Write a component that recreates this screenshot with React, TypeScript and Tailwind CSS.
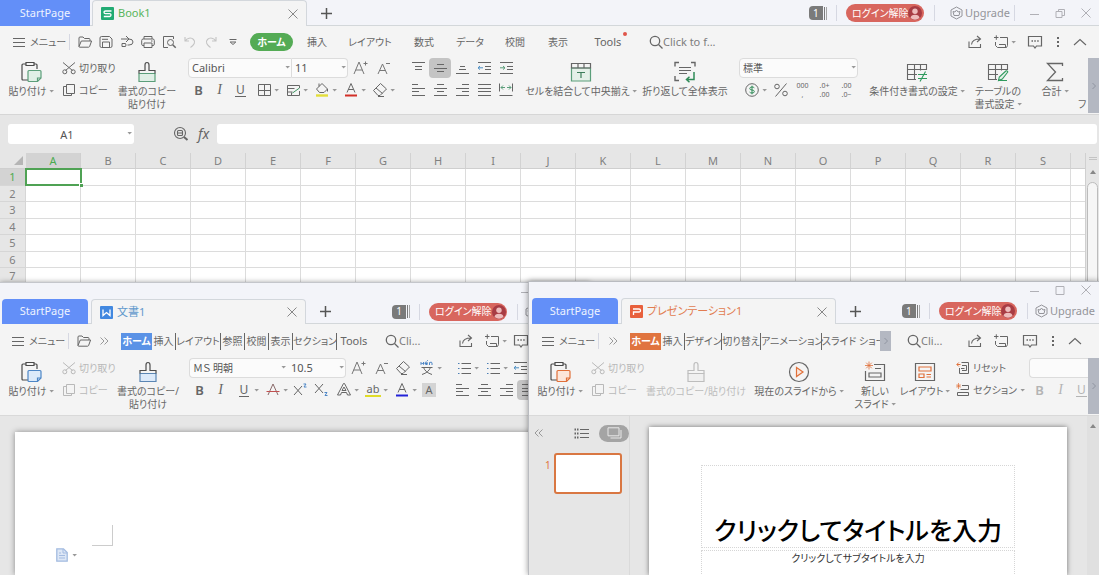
import React from 'react';
import type { ReactNode } from 'react';

type Kids = { children?: ReactNode };

/* ---------- drawing helpers ---------- */

function Ic({ w = 16, h = 16, sw = 1, className = '', children }: Kids & { w?: number; h?: number; sw?: number; className?: string }) {
  return (
    <svg
      width={w}
      height={h}
      viewBox={`0 0 ${w} ${h}`}
      fill="none"
      stroke="currentColor"
      strokeWidth={sw}
      aria-hidden="true"
      className={`shrink-0 ${className}`}
    >
      {children}
    </svg>
  );
}

const Caret = () => (
  <svg width="5" height="3" viewBox="0 0 5 3" aria-hidden="true" className="shrink-0">
    <path d="M.5 0h4.500L2.500 2.500z" fill="#999" />
  </svg>
);

const Lines = ({ rows }: { rows: [number, number, number][] }) => (
  <Ic>
    <path d={rows.map(([y, a, b]) => `M${a} ${y}H${b}`).join('')} />
  </Ic>
);

const Menu = () => (
  <Ic w={12} h={10}>
    <path d="M0 1.5h12M0 5.500h12M0 9.500h12" />
  </Ic>
);
const Folder = () => (
  <Ic>
    <path d="M2 12.5V4q0-1 1-1h3l1.5 1.5H12q1 0 1 1V7M2 12.5 4.3 7H14.6l-2 5.5q-.3.7-1 .7H2.6q-.6 0-.6-.7z" />
  </Ic>
);
const Save = () => (
  <Ic>
    <path d="M2 4q0-1.5 1.5-1.5h8L14 5v7q0 1.500-1.500 1.500h-9Q2 13.500 2 12zM4.500 13.500V8h7v5.500M4 5.300h6" />
  </Ic>
);
const Export = () => (
  <Ic>
    <path d="M2 5h8q4 0 4 3t-4 3H8.500M7 2l3 3-3 3M3 9.500h3.500q1 1.500 0 3H3z" />
  </Ic>
);
const Print = () => (
  <Ic>
    <path d="M4 5V2.500h8V5M4 11.500H3q-1.300 0-1.300-1.300V6.500Q1.700 5 3.200 5h9.600q1.500 0 1.500 1.500v3.700q0 1.300-1.300 1.300h-1M4 9h8v4.500H4zM11 7h1.500" />
  </Ic>
);
const Preview = () => (
  <Ic>
    <path d="M7 13.500H2.500v-11h10V5" />
    <circle cx="9.500" cy="8.500" r="3" />
    <path d="m11.700 10.800 3 3" strokeWidth="1.500" />
  </Ic>
);
const Undo = () => (
  <Ic className="text-[#c4c4c4]" sw={1.1}>
    <path d="M3 3v4h4M3.300 7C5 4 9 3 11.500 5.500S12 11 8.500 13.500" />
  </Ic>
);
const Redo = () => (
  <Ic className="text-[#c4c4c4]" sw={1.1}>
    <path d="M13 3v4H9M12.700 7C11 4 7 3 4.500 5.500S4 11 7.500 13.500" />
  </Ic>
);
const QuickMore = () => (
  <Ic w={10} h={10}>
    <path d="M1.500 2.500h7M2.200 5 5 7.500 7.800 5z" />
  </Ic>
);
const Search = () => (
  <Ic w={14} h={14} sw={1.3}>
    <circle cx="6" cy="6" r="4.700" />
    <path d="m9.500 9.500 4 4" />
  </Ic>
);
const Share = () => (
  <Ic sw={1.1}>
    <path d="M2 7.500v6h11.500V10M4.500 10.500c.5-4 3-5.500 8.500-5.500M10 2l3.500 3L10 8" />
  </Ic>
);
const Collab = () => (
  <Ic>
    <path d="M7 3.500h7.500v8l-1 2H4.500l-2-2V8M1 3.500h4.500M3.300 1.300v4.500M12.500 13.500v-3H6" />
  </Ic>
);
const Comment = () => (
  <Ic sw={1.2}>
    <path d="M1.500 2.500h13v9.500h-5L8 14l-1.500-2h-5z" />
    <path d="M4.500 7H6M7.300 7h1.500M10.200 7h1.500" strokeWidth="1.400" />
  </Ic>
);
const Dots = () => (
  <svg width="2" height="12" viewBox="0 0 2 12" aria-hidden="true">
    <path d="M0 1h2v2H0zM0 5h2v2H0zM0 9h2v2H0z" fill="#666" />
  </svg>
);
const ChevUp = () => (
  <Ic w={14} h={8} sw={1.1}>
    <path d="m1 7 6-5.500L13 7" />
  </Ic>
);
const Close = () => (
  <Ic w={10} h={10}>
    <path d="m.5.500 9 9M9.500.500l-9 9" />
  </Ic>
);
const More = ({ left = false }: { left?: boolean }) => (
  <Ic w={9} h={8} className="text-[#999]">
    <path d={left ? 'M4.500.500 1 4l3.500 3.500M8.500.500 5 4l3.500 3.500' : 'm.5.500 3.500 3.500L.5 7.500M4.500.500 8 4 4.500 7.500'} />
  </Ic>
);
const Scissors = () => (
  <Ic w={14} h={14}>
    <path d="m1 1.500 9.500 8M13 1.500 3.500 9.500" />
    <circle cx="2.800" cy="10.800" r="2" />
    <circle cx="11.200" cy="10.800" r="2" />
  </Ic>
);
const Copy = () => (
  <Ic w={14} h={14}>
    <path d="M4.500 1.500h8v9h-8zM4.500 3.500h-3v9h8v-2" />
  </Ic>
);
const Paste = ({ line, fill }: { line: string; fill: string }) => (
  <Ic w={22} h={22} sw={1.2} className="text-[#4a4a4a]">
    <path d="M8 19H3q-1 0-1-1V4q0-1 1-1h3M14 3h2q1 0 1 1v4" />
    <path d="M6 1.500h8v3H6z" />
    <path d="M9 9.500h11q1 0 1 1V17l-3.500 3.500H9q-1 0-1-1v-9q0-1 1-1z" fill={fill} stroke={line} />
    <path d="M21 17h-3.500v3.500" stroke={line} />
  </Ic>
);
const Painter = ({ line, fill, dark = '#4c4c4c' }: { line: string; fill: string; dark?: string }) => (
  <Ic w={22} h={22} sw={1.2}>
    <path d="M3 12.500h16v8H3z" fill={fill} stroke={line} />
    <path d="M3 12.500V9.500h6V4q0-2.500 2-2.500T13 4v5.500h6v3" stroke={dark} />
  </Ic>
);
const Eraser = () => (
  <Ic>
    <path d="m1.500 8.500 7-7 6 5.500-6.500 6.500H6zM4 6l6.500 5.500" />
    <path d="M6 14.500h6" />
  </Ic>
);
const Grow = ({ minus = false }: { minus?: boolean }) => (
  <Ic className="text-[#777]">
    <path d={minus ? 'M3 14 7.500 4 12 14M4.700 10.500h5.600M11 3.500h4' : 'M2 14 7 2l5 12M3.700 10h6.600M11.500 3.500h4M13.500 1.500v4'} />
  </Ic>
);
const Indent = ({ out = false }: { out?: boolean }) => (
  <Ic>
    <path d="M2 2.500h13M9 6.500h6M9 9.500h6M2 13.500h13" />
    <path d={out ? 'M2 7.800h5M4 6 2 7.800 4 9.600' : 'M2 7.800h5M5 6l2 1.800L5 9.600'} stroke={out ? '#4d8fc4' : '#5b9e7a'} />
  </Ic>
);
const Distribute = () => (
  <Ic>
    <path d="M1.500 1.500v8M14.500 1.500v8M1.500 13.500h13" />
    <path d="M3 5.500h4M13 5.500H9M5 3.500l-2 2 2 2M11 3.500l2 2-2 2" stroke="#5b9e7a" />
  </Ic>
);
const Borders = () => (
  <Ic>
    <path d="M2.500 2.500h12v11h-12zM8.500 2.500v11M2.500 8.500h12" />
  </Ic>
);
const CellStyle = () => (
  <Ic>
    <path d="M14.500 6V3.500h-12v10h12V9M2.500 6.500h7M2.500 10h5M6.500 13.500v-3" />
    <path d="m7.500 11 7-5" stroke="#3d9560" />
  </Ic>
);
const Fill = () => (
  <Ic>
    <path d="m2.500 7 5.500-5.500L13.500 7 10 10.500H5.500zM5 4.500V1.500M13.500 7v2.500" />
    <path d="M2 13.500h12" stroke="#e3de3a" strokeWidth="2.400" />
  </Ic>
);
const LetterBar = ({ bar }: { bar: string }) => (
  <Ic>
    <path d="M4 10.500 8 1.500l4 9M5.300 7.500h5.400" />
    <path d="M2 13.500h12" stroke={bar} strokeWidth="2" />
  </Ic>
);
const Ruby = () => (
  <Ic>
    <path d="M2.500 7.500h11M11.500 7.500q-2 5-8.500 7M4.500 7.500q2 5 8.500 7" />
    <path d="M2 2v2.500l1.300-1.500L4.500 4.500V2M6 3.500h2.500Q8.500 2 7.200 2T6 3.500t2.500 1M10.500 5V2.500q2.500-1 2.500.5v2M8 .5l1-.4" stroke="#4d86c6" />
  </Ic>
);
const Merge = () => (
  <Ic w={22} h={22} sw={1.2}>
    <path d="M1.500 7h19v13h-19z" fill="#e4f0e8" stroke="#5b9e7a" />
    <path d="M1.500 7V2.500h19V7zM8 2.500V7M14 2.500V7" />
    <path d="M7 11.500h8M11 11.500V17" stroke="#3d7d5a" />
  </Ic>
);
const Wrap = () => (
  <Ic w={22} h={22}>
    <path d="M1 5.500v-4h4M17 1.500h4v4M1 15v4.500h4" strokeWidth="1.400" />
    <path d="M5 6.500h12M5 9.500h12M5 12.500h8" />
    <path d="M20 11v7.500h-7M15.500 15.800l-3 2.700 3 2.700" stroke="#2f8a57" strokeWidth="1.500" />
  </Ic>
);
const TableIcon = ({ kind }: { kind: 'cond' | 'style' }) => (
  <Ic w={22} h={22} sw={1.1}>
    <path d="M20.500 9V3.500h-19v15H10M1.500 8.500h19M8.500 3.500v15M1.500 13.500H11M14.500 3.500v6" />
    {kind === 'cond' ? (
      <path d="M12 13.500h9M12 17.500h9M19.500 10.500l-5.500 10" stroke="#2f9a5d" />
    ) : (
      <path d="m11.500 19.500.8-3.500 6.500-6q1.500-.7 2 1l-5.500 7zM11.500 19.500H20" stroke="#2f9a5d" fill="#e4f0e8" />
    )}
  </Ic>
);
const Sum = () => (
  <Ic w={22} h={22} sw={1.3}>
    <path d="M18.500 5V2.500H3.500l8 8.500-8 8.500h15V17" />
  </Ic>
);
const Money = () => (
  <Ic>
    <circle cx="8" cy="8" r="6.300" />
    <path d="M10.300 5.800Q9.500 5 8 5q-2.200 0-2.200 1.500T8 8t2.300 1.500T8 11q-1.700 0-2.400-.9M8 3.700v8.600" stroke="#2f8a57" />
  </Ic>
);
const Percent = () => (
  <Ic>
    <circle cx="4" cy="4.500" r="2.300" />
    <circle cx="12" cy="11.500" r="2.300" />
    <path d="m2.500 14.500 11-13" />
  </Ic>
);
const FindCell = () => (
  <Ic sw={1.1}>
    <circle cx="7" cy="7" r="5.500" />
    <path d="M4.500 5.500q0-1 1-1h3q1 0 1 1v3q0 1-1 1h-3q-1 0-1-1zM4.500 7h5" />
    <path d="m11 11 3.500 3" strokeWidth="2" />
  </Ic>
);
const Bullets = () => (
  <Ic>
    <path d="M5.500 3.500H15M5.500 8.500H15M5.500 13.500H15" />
    <path d="M2 3.500h1.500M2 8.500h1.500M2 13.500h1.500" stroke="#4d7fb4" />
  </Ic>
);
const Play = () => (
  <Ic w={22} h={22} sw={1.2}>
    <circle cx="11" cy="11" r="9.500" />
    <path d="m8.500 6.500 6.500 4.500-6.500 4.500z" stroke="#e0703a" fill="#fce6da" />
  </Ic>
);
const NewSlide = () => (
  <Ic w={22} h={22} sw={1.2}>
    <path d="M10 3.500h10.500v16h-19V10M11 7.500h6M5 12h12v4H5z" />
    <path d="M5 .5v8M1 4.500h8M2.200 1.700l5.600 5.600M7.800 1.700 2.200 7.300" stroke="#e0703a" strokeWidth=".8" />
  </Ic>
);
const LayoutIcon = () => (
  <Ic w={22} h={22} sw={1.2}>
    <path d="M1.500 2.500h19v17h-19z" />
    <path d="M5 6h12v4H5zM5 13h5v3.500H5zM12.500 13.500H17M12.500 16H17" stroke="#e0703a" />
  </Ic>
);
const Reset = () => (
  <Ic w={14} h={14}>
    <path d="M5.500 1.500h7v11h-9V7M6 4.500h4.500v5H6M5 7.500h3.500" />
    <path d="M1 3.500h3.500M2.800 1.500l-2 2 2 2" stroke="#e0703a" />
  </Ic>
);
const SectionIcon = () => (
  <Ic w={14} h={14}>
    <path d="M6 2.500h6.500v4h-8M1.500 9.500h11v3h-11z" />
    <path d="M2.500 0v6M0 3h5M.8 1.200l3.500 3.500M4.300 1.200.8 4.700" stroke="#e0703a" strokeWidth=".7" />
  </Ic>
);

/* ---------- controls ---------- */

function Btn({ label, w = 'w-[22px]', on = false, children }: Kids & { label: string; w?: string; on?: boolean }) {
  return (
    <button
      type="button"
      aria-label={label}
      className={`flex h-5 shrink-0 items-center justify-center rounded-sm ${w} ${on ? 'bg-[#c4c4c4]' : ''}`}
    >
      {children}
    </button>
  );
}

function Split({ label, children }: Kids & { label: string }) {
  return (
    <button type="button" aria-label={label} className="flex h-5 w-[29px] shrink-0 items-center gap-0.5 pl-[5px]">
      {children}
      <Caret />
    </button>
  );
}

function Big({ icon, lines, w, caret = false, dim = false }: { icon: ReactNode; lines: string[]; w: string; caret?: boolean; dim?: boolean }) {
  return (
    <button type="button" className={`flex shrink-0 flex-col items-center whitespace-nowrap ${w} ${dim ? 'text-[#bdbdbd]' : ''}`}>
      <span className="flex h-[27px] items-center">{icon}</span>
      {lines.map((t, i) => (
        <span key={t} className="flex items-center gap-0.5 leading-[13px]">
          {t}
          {caret && i === lines.length - 1 && <Caret />}
        </span>
      ))}
    </button>
  );
}

function Small({ icon, text, caret = false, dim = false }: { icon: ReactNode; text: string; caret?: boolean; dim?: boolean }) {
  return (
    <button type="button" className={`flex h-5 items-center gap-[3px] whitespace-nowrap ${dim ? 'text-[#b9b9b9]' : ''}`}>
      {icon}
      {text}
      {caret && <Caret />}
    </button>
  );
}

const Two = ({ w = '', children }: Kids & { w?: string }) => <div className={`flex shrink-0 flex-col gap-0.5 ${w}`}>{children}</div>;
const Row = ({ children }: Kids) => <div className="flex items-center">{children}</div>;

function Pick({ label, value, w, shape }: { label: string; value: string; w: string; shape: string }) {
  return (
    <label className={`relative block h-5 shrink-0 ${w}`}>
      <select
        aria-label={label}
        defaultValue={value}
        className={`h-full w-full appearance-none border border-[#dcdcdc] bg-[#fbfbfb] pl-[3px] leading-4 text-[#555] ${shape}`}
      >
        <option>{value}</option>
      </select>
      <span className="pointer-events-none absolute top-2 right-0.5 flex">
        <Caret />
      </span>
    </label>
  );
}

/* ---------- title bar ---------- */

function WindowButtons({ restored = false }: { restored?: boolean }) {
  return (
    <div className="flex text-[#b0b0b6]">
      <Btn label="最小化" w="w-[26px]">
        <Ic w={10} h={10}>
          <path d="M1 6.500h9" />
        </Ic>
      </Btn>
      <Btn label="最大化" w="w-[26px]">
        <Ic w={10} h={10}>
          <path d={restored ? 'M1 3.500h6v6H1zM3.500 3.500v-2h6v6H7' : 'M1 1.500h8v8H1z'} />
        </Ic>
      </Btn>
      <Btn label="閉じる" w="w-[26px]">
        <Close />
      </Btn>
    </div>
  );
}

const Bar = ({ className = '' }: { className?: string }) => <span className={`h-4 w-px shrink-0 bg-[#d6d8e2] ${className}`} />;

function Account({ gap, covered = false }: { gap: string; covered?: boolean }) {
  return (
    <div className="ml-auto flex shrink-0 items-center">
      <button type="button" className="flex h-[14px] items-center gap-px text-[10px] text-white">
        <span className="flex h-[14px] w-[14px] items-center justify-center rounded-l-sm bg-[#7a7a7a]">1</span>
        <span className="h-[13px] w-px bg-[#7a7a7a]" />
        <span className="h-[13px] w-px bg-[#a4a4a4]" />
      </button>
      <Bar className="ml-[9px]" />
      <button
        type="button"
        className="ml-[9px] flex h-[18px] w-[78px] items-center justify-between rounded-full bg-[#d8665e] pr-0.5 pl-1.5 text-[10px] whitespace-nowrap text-white"
      >
        ログイン解除
        <svg width="14" height="14" viewBox="0 0 14 14" aria-hidden="true" className="shrink-0">
          <circle cx="7" cy="7" r="7" fill="#a83c44" />
          <circle cx="7" cy="5.200" r="2.700" fill="#eebcbc" />
          <path d="M2.500 12Q3 8.800 7 8.800t4.500 3.200Q7 15.500 2.500 12z" fill="#eebcbc" />
        </svg>
      </button>
      <Bar className="ml-[10px]" />
      <button type="button" aria-label="Upgrade" className={`flex items-center gap-0.5 text-[11px] text-[#94949a] ${gap}`}>
        <Ic w={13} h={14}>
          <path d="M6.500 1 12 4v6l-5.500 3L1 10V4z" />
          <path d="m6.500 4 1.500 2 2-.5-1 4H4l-1-4 2 .5z" />
        </Ic>
        {covered ? <span className="w-[46px]" /> : 'Upgrade'}
      </button>
    </div>
  );
}

const marks = {
  S: { bg: 'bg-[#22ab73]', text: 'text-[#58b45c]', d: 'M10.500 4H4.500Q3 4 3 5.300t1.500 1.300h4Q10 6.600 10 8t-1.500 1.500H2.800' },
  W: { bg: 'bg-[#4288e0]', text: 'text-[#6299cc]', d: 'M3 3.500v6L6.500 6.500 10 9.500v-6' },
  P: { bg: 'bg-[#e8603c]', text: 'text-[#e27c50]', d: 'M3 4h6q1.500 0 1.500 1.500T9 7H3.500v3' },
};

function Tabs({ mark, name, height, start, children }: Kids & { mark: keyof typeof marks; name: string; height: string; start: string }) {
  const m = marks[mark];
  return (
    <div className={`flex items-stretch shadow-[inset_0_-1px_0_#d3d7da] ${height}`}>
      <button type="button" className={`flex shrink-0 items-center justify-center bg-[#638ff8] text-[11px] text-[#eef3ff] ${start}`}>
        StartPage
      </button>
      <div className={`flex w-[215px] shrink-0 items-center rounded-t-sm border border-b-0 border-[#d3d7dc] bg-[#f4f4f4] pr-2 pl-2 text-[11px] ${m.text}`}>
        <span className={`mr-1 flex rounded-[1px] text-white ${m.bg}`}>
          <Ic w={13} h={13} sw={1.3}>
            <path d={m.d} />
          </Ic>
        </span>
        {name}
        <button type="button" aria-label="タブを閉じる" className="ml-auto text-[#888]">
          <Close />
        </button>
      </div>
      <button type="button" aria-label="新しいタブ" className="ml-[14px] flex items-center text-[#555]">
        <Ic w={11} h={11} sw={1.5}>
          <path d="M5.500 0v11M0 5.500h11" />
        </Ic>
      </button>
      {children}
    </div>
  );
}

const MenuButton = () => (
  <button type="button" className="flex w-[56px] shrink-0 items-center gap-[5px] text-[10px] whitespace-nowrap">
    <Menu />
    メニュー
  </button>
);

function MenuTail({ space, caret = false }: { space: string; caret?: boolean }) {
  return (
    <div className="ml-auto flex shrink-0 items-center">
      <Btn label="共有" w="w-[26px]">
        <Share />
      </Btn>
      {caret ? (
        <Split label="共同編集">
          <Collab />
        </Split>
      ) : (
        <Btn label="共同編集" w="w-[26px]">
          <Collab />
        </Btn>
      )}
      <span className={space} />
      <Btn label="コメント" w="w-6">
        <Comment />
      </Btn>
      <Btn label="その他">
        <Dots />
      </Btn>
      <Btn label="リボンを折りたたむ">
        <ChevUp />
      </Btn>
    </div>
  );
}

const Finder = ({ text, gap }: { text: string; gap: string }) => (
  <button type="button" className={`flex shrink-0 items-center text-[11px] whitespace-nowrap ${gap}`}>
    <Search />
    <span className="text-[#7d7d7d]">{text}</span>
  </button>
);

type Tab = { t: string; w: string };

function RuledTabs({ home, tabs }: { home: string; tabs: Tab[] }) {
  return (
    <nav className="flex shrink-0 items-center text-[10px] whitespace-nowrap">
      <button type="button" className={`h-[17px] w-[31px] font-bold text-white ${home}`}>
        ホーム
      </button>
      {tabs.map((x, i) => (
        <button key={x.t} type="button" className={`h-[17px] shrink-0 ${x.w} ${i < tabs.length - 1 ? 'border-r border-[#666]' : ''}`}>
          {x.t}
        </button>
      ))}
    </nav>
  );
}

const SideScroll = ({ h }: { h: string }) => (
  <button type="button" aria-label="次へ" className={`flex w-[11px] shrink-0 items-center justify-center bg-[#b4b8c2] text-[#8f94a0] ${h}`}>
    <Ic w={4} h={8}>
      <path d="m.5 1 3 3-3 3" />
    </Ic>
  </button>
);

const B = () => <b className="text-[13px] leading-none font-semibold">B</b>;
const I = () => <i className="font-['Liberation_Serif',serif] text-[14px] leading-none">I</i>;
const U = () => <span className="border-b border-current px-px text-[12px] leading-[12px]">U</span>;

/* ---------- spreadsheet ---------- */

const columns = 'ABCDEFGHIJKLMNOPQRS'.split('');
const sheetTabs: Tab[] = [
  { t: '挿入', w: 'w-12' },
  { t: 'レイアウト', w: 'w-[58px]' },
  { t: '数式', w: 'w-[50px]' },
  { t: 'データ', w: 'w-[42px]' },
  { t: '校閲', w: 'w-12' },
  { t: '表示', w: 'w-[38px]' },
];

function Digits({ top, bottom }: { top: string; bottom: string }) {
  return (
    <span className="flex flex-col text-[7px] leading-[9px]">
      <span>{top}</span>
      <span>{bottom}</span>
    </span>
  );
}

function Spreadsheet() {
  return (
    <section className="absolute inset-0 flex flex-col bg-[#f4f4f4]">
      <div className="bg-[#f3f4f9]">
        <Tabs mark="S" name="Book1" height="h-[26px]" start="mr-0.5 w-[90px]">
          <Account gap="ml-[15px]" />
          <div className="ml-1 flex items-center gap-1.5">
            <Bar />
            <WindowButtons restored />
          </div>
        </Tabs>
      </div>

      <div className="flex h-8 items-center pr-2 pl-[13px]">
        <MenuButton />
        <Bar className="mr-1" />
        <Btn label="開く" w="w-[21px]"><Folder /></Btn>
        <Btn label="保存" w="w-[21px]"><Save /></Btn>
        <Btn label="出力" w="w-[21px]"><Export /></Btn>
        <Btn label="印刷" w="w-[21px]"><Print /></Btn>
        <Btn label="印刷プレビュー" w="w-[21px]"><Preview /></Btn>
        <Btn label="元に戻す" w="w-[21px]"><Undo /></Btn>
        <Btn label="やり直し" w="w-[21px]"><Redo /></Btn>
        <Btn label="カスタマイズ" w="w-6"><QuickMore /></Btn>
        <nav className="ml-[5px] flex shrink-0 items-center text-[10px] whitespace-nowrap">
          <button type="button" className="h-[18px] w-[43px] rounded-full bg-[#54ab55] font-bold text-white">ホーム</button>
          {sheetTabs.map((x) => (
            <button key={x.t} type="button" className={`shrink-0 ${x.w}`}>{x.t}</button>
          ))}
          <button type="button" className="relative w-[62px] text-[11px]">
            Tools
            <span className="absolute -top-0.5 right-3 size-1 rounded-full bg-[#e0554a]" />
          </button>
        </nav>
        <Finder text="Click to f..." gap="ml-[10px]" />
        <MenuTail caret space="w-1.5" />
      </div>

      <div className="flex h-14 items-start">
        <Big w="w-[62px]" icon={<Paste line="#5b9e7a" fill="#e0efe6" />} lines={['貼り付け']} caret />
        <Two w="w-14">
          <Small icon={<Scissors />} text="切り取り" />
          <Small icon={<Copy />} text="コピー" />
        </Two>
        <Big w="w-[58px]" icon={<Painter line="#5b9e7a" fill="#e0efe6" />} lines={['書式のコピー', '貼り付け']} />
        <Two w="ml-3 w-[219px]">
          <Row>
            <Pick label="フォント" value="Calibri" w="w-[104px] text-[11px]" shape="rounded-l-sm" />
            <Pick label="フォント サイズ" value="11" w="w-14 text-[11px]" shape="rounded-r-sm border-l-0" />
            <Btn label="フォントの拡大" w="w-6"><Grow /></Btn>
            <Btn label="フォントの縮小"><Grow minus /></Btn>
          </Row>
          <Row>
            <Btn label="太字" w="w-[21px]"><B /></Btn>
            <Btn label="斜体" w="w-[21px]"><I /></Btn>
            <Btn label="下線" w="w-[21px]"><U /></Btn>
            <Split label="罫線"><Borders /></Split>
            <Split label="セルのスタイル"><CellStyle /></Split>
            <Split label="塗りつぶし"><Fill /></Split>
            <Split label="文字の色"><LetterBar bar="#d22f27" /></Split>
            <Split label="クリア"><Eraser /></Split>
          </Row>
        </Two>
        <Two w="w-[110px]">
          <Row>
            <Btn label="上揃え"><Lines rows={[[2.5, 2, 15], [6.5, 5, 12], [9.5, 5, 12]]} /></Btn>
            <Btn label="上下中央揃え" on><Lines rows={[[4.5, 5, 12], [8.5, 2, 15], [11.5, 5, 12]]} /></Btn>
            <Btn label="下揃え"><Lines rows={[[6.5, 6, 11], [9.5, 5, 12], [13.5, 2, 15]]} /></Btn>
            <Btn label="インデント解除"><Indent out /></Btn>
            <Btn label="インデント"><Indent /></Btn>
          </Row>
          <Row>
            <Btn label="左揃え"><Lines rows={[[2.5, 2, 8], [6.5, 2, 15], [9.5, 2, 9], [13.5, 2, 15]]} /></Btn>
            <Btn label="中央揃え"><Lines rows={[[2.5, 5, 12], [6.5, 2, 15], [9.5, 5, 12], [13.5, 2, 15]]} /></Btn>
            <Btn label="右揃え"><Lines rows={[[2.5, 8, 15], [6.5, 2, 15], [9.5, 8, 15], [13.5, 2, 15]]} /></Btn>
            <Btn label="両端揃え"><Lines rows={[[2.5, 2, 15], [6.5, 2, 15], [9.5, 2, 15], [13.5, 2, 15]]} /></Btn>
            <Btn label="均等割り付け"><Distribute /></Btn>
          </Row>
        </Two>
        <Big w="ml-2 w-28" icon={<Merge />} lines={['セルを結合して中央揃え']} caret />
        <Big w="ml-1 w-[88px]" icon={<Wrap />} lines={['折り返して全体表示']} />
        <Two w="ml-[10px] w-[119px]">
          <Pick label="表示形式" value="標準" w="w-full" shape="rounded-sm" />
          <Row>
            <Split label="通貨"><Money /></Split>
            <Btn label="パーセント" w="w-[25px]"><Percent /></Btn>
            <Btn label="桁区切り" w="w-[19px]"><Digits top="000" bottom="," /></Btn>
            <Btn label="小数点以下を増やす" w="w-[25px]"><Digits top=".0+" bottom=".00" /></Btn>
            <Btn label="小数点以下を減らす" w="w-[19px]"><Digits top=".00" bottom=".0−" /></Btn>
          </Row>
        </Two>
        <Big w="ml-[9px] w-[100px]" icon={<TableIcon kind="cond" />} lines={['条件付き書式の設定']} caret />
        <Big w="ml-[3px] w-14" icon={<TableIcon kind="style" />} lines={['テーブルの', '書式設定']} caret />
        <Big w="w-[58px]" icon={<Sum />} lines={['合計']} caret />
        <span className="-ml-1.5 mt-10 shrink-0 leading-[13px]">フ</span>
        <div className="ml-auto">
          <SideScroll h="h-[55px]" />
        </div>
      </div>

      <div className="flex h-[39px] items-center border-t border-[#d6d6d6] bg-[#e6e6e6] pr-0.5 pl-2">
        <label className="relative block">
          <input aria-label="名前ボックス" defaultValue="A1" className="h-5 w-[126px] rounded-[3px] bg-white pr-2 text-center text-[11px] text-[#555]" />
          <span className="absolute top-2 right-0.5 flex"><Caret /></span>
        </label>
        <span className="ml-[39px] flex w-[25px] shrink-0"><FindCell /></span>
        <span className="w-[19px] shrink-0 text-[14px] leading-5 italic">fx</span>
        <input aria-label="数式バー" className="h-5 min-w-0 flex-1 rounded-[3px] bg-white" />
      </div>

      <div className="flex min-h-0 flex-1 bg-[#e6e6e6]">
        <div className="min-w-0 flex-1 overflow-hidden">
          <table className="w-full table-fixed border-separate border-spacing-0 text-[#808080]">
            <colgroup>
              <col className="w-[26px]" />
              {columns.map((c) => (
                <col key={c} className="w-[55px]" />
              ))}
              <col />
            </colgroup>
            <thead>
              <tr className="text-[11px] leading-[14px]">
                <th className="h-4 border-b border-[#cfcfcf] p-0">
                  <svg width="9" height="9" viewBox="0 0 9 9" aria-hidden="true" className="ml-[14px]">
                    <path d="M9 0v9H0z" fill="#b5b5b5" />
                  </svg>
                </th>
                {columns.map((c) => (
                  <th
                    key={c}
                    scope="col"
                    className={`border-r border-b p-0 font-normal ${c === 'A' ? 'border-[#cfcfcf] bg-[#d3d3d3] text-[#4bab50]' : 'border-r-[#d2d2d2] border-b-[#cfcfcf]'}`}
                  >
                    {c}
                  </th>
                ))}
                <th className="border-b border-[#cfcfcf] p-0" />
              </tr>
            </thead>
            <tbody>
              {[1, 2, 3, 4, 5, 6, 7].map((r) => (
                <tr key={r} className="odd:h-[17px] even:h-4">
                  <th
                    scope="row"
                    className={`border-r border-b border-[#d6d6d6] p-0 text-[11px] leading-[14px] font-normal ${r === 1 ? 'bg-[#d3d3d3] text-[#4bab50]' : ''}`}
                  >
                    {r}
                  </th>
                  {columns.map((c) => (
                    <td key={c} className="relative border-r border-b border-[#dcdcdc] bg-white p-0">
                      {r === 1 && c === 'A' && (
                        <span className="absolute -inset-px -right-0.5 z-10 border-2 border-[#4fa254]">
                          <span className="absolute -right-[3px] -bottom-[3px] size-1 border-t border-l border-white bg-[#4fa254]" />
                        </span>
                      )}
                    </td>
                  ))}
                  <td className="border-b border-[#dcdcdc] bg-white p-0" />
                </tr>
              ))}
            </tbody>
          </table>
        </div>
        <div className="flex w-[14px] flex-col items-center border-l border-[#d0d0d0] pt-1">
          <span className="h-[3px] w-2 border-y border-[#c4c4c4]" />
          <svg width="6" height="4" viewBox="0 0 6 4" aria-hidden="true" className="mt-2.5 mb-2">
            <path d="M3 0 6 4H0z" fill="#888" />
          </svg>
          <span className="w-[11px] flex-1 rounded-t-md border border-[#bcbcbc] bg-[#f6f6f6]" />
        </div>
      </div>
    </section>
  );
}

/* ---------- word processor ---------- */

const writerTabs: Tab[] = [
  { t: '挿入', w: 'w-6' },
  { t: 'レイアウト', w: 'w-[45px]' },
  { t: '参照', w: 'w-6' },
  { t: '校閲', w: 'w-6' },
  { t: '表示', w: 'w-6' },
  { t: 'セクション', w: 'w-11' },
  { t: 'Tools', w: 'w-[34px] text-[11px]' },
];

function Writer() {
  return (
    <section className="absolute top-[282px] bottom-0 left-0 flex w-[590px] flex-col border-t border-[#c4c6cb] bg-[#f4f4f4] shadow-[0_0_5px_rgba(0,0,0,0.35)]">
      <div className="bg-[#f3f4f9] pl-0.5">
        <div className="flex h-4 items-center justify-end">
          <WindowButtons />
        </div>
        <Tabs mark="W" name="文書1" height="h-[25px]" start="mr-[3px] w-[86px] rounded-t-sm">
          <Account gap="ml-[7px]" covered />
          <span className="w-1" />
        </Tabs>
      </div>

      <div className="flex h-[34px] items-center pr-[13px] pl-3">
        <MenuButton />
        <Bar className="mr-1" />
        <Btn label="開く" w="w-[21px]"><Folder /></Btn>
        <Btn label="クイックアクセス" w="w-[21px]"><More /></Btn>
        <span className="w-1.5" />
        <RuledTabs home="bg-[#5a92e6]" tabs={writerTabs} />
        <Finder text="Cli..." gap="ml-[14px]" />
        <MenuTail caret space="w-px" />
      </div>

      <div className="flex h-[58px] items-start border-b border-[#d9d9d9]">
        <Big w="w-[62px]" icon={<Paste line="#4d86c6" fill="#dceafa" />} lines={['貼り付け']} caret />
        <Two w="w-14">
          <Small dim icon={<Scissors />} text="切り取り" />
          <Small dim icon={<Copy />} text="コピー" />
        </Two>
        <Big w="w-[60px]" icon={<Painter line="#5b86b4" fill="#dceafa" />} lines={['書式のコピー/', '貼り付け']} />
        <Two w="ml-[11px] w-[262px]">
          <Row>
            <Pick label="フォント" value="ＭＳ 明朝" w="w-[99px]" shape="rounded-l-sm border-r-0" />
            <Pick label="フォント サイズ" value="10.5" w="w-[58px] text-[11px]" shape="rounded-r-sm border-l-0" />
            <Btn label="フォントの拡大" w="w-6"><Grow /></Btn>
            <Btn label="フォントの縮小"><Grow minus /></Btn>
            <Btn label="書式のクリア"><Eraser /></Btn>
            <Split label="ルビ"><Ruby /></Split>
          </Row>
          <Row>
            <Btn label="太字" w="w-[21px]"><B /></Btn>
            <Btn label="斜体" w="w-[21px]"><I /></Btn>
            <Split label="下線"><span className="flex w-4 justify-center"><U /></span></Split>
            <Split label="取り消し線">
              <Ic className="text-[#8a6a6a]"><path d="M3 13 8 2l5 11" /><path d="M1.500 9.500h13" stroke="#c05050" /></Ic>
            </Split>
            <Btn label="上付き" w="w-[21px]">
              <Ic><path d="m2 4 8 9M10 4l-8 9" /><path d="M11.500 2h2.500L12 5h2.500" stroke="#4d86c6" /></Ic>
            </Btn>
            <Btn label="下付き" w="w-[21px]">
              <Ic><path d="m2 2 8 9M10 2l-8 9" /><path d="M11.500 10.500H14l-2 3h2.500" stroke="#4d86c6" /></Ic>
            </Btn>
            <Split label="文字の効果">
              <Ic><path d="M1.500 13 7.500 1.500h1l6 11.500h-3l-1-2.500h-5L4.500 13zM6 8.500h4L8 5z" /></Ic>
            </Split>
            <Split label="蛍光ペン">
              <span className="w-4 border-b-2 border-[#e0dc28] text-center text-[11px] leading-3">ab</span>
            </Split>
            <Split label="文字の色"><LetterBar bar="#2323d8" /></Split>
            <Btn label="文字の網かけ"><span className="bg-[#d4d4d4] px-[3px] text-[11px] leading-[14px]">A</span></Btn>
          </Row>
        </Two>
        <Two>
          <Row>
            <Split label="箇条書き"><Bullets /></Split>
            <Split label="段落番号"><Bullets /></Split>
            <Btn label="インデント解除"><Indent out /></Btn>
          </Row>
          <Row>
            <Btn label="左揃え"><Lines rows={[[2.5, 2, 8], [6.5, 2, 15], [9.5, 2, 9], [13.5, 2, 15]]} /></Btn>
            <Btn label="中央揃え"><Lines rows={[[2.5, 5, 12], [6.5, 2, 15], [9.5, 5, 12], [13.5, 2, 15]]} /></Btn>
            <Btn label="右揃え"><Lines rows={[[2.5, 8, 15], [6.5, 2, 15], [9.5, 8, 15], [13.5, 2, 15]]} /></Btn>
            <Btn label="両端揃え" on><Lines rows={[[2.5, 2, 15], [6.5, 2, 15], [9.5, 2, 15], [13.5, 2, 15]]} /></Btn>
          </Row>
        </Two>
      </div>

      <div className="flex min-h-0 flex-1 bg-[#e6e6e6] pt-4 pl-[15px]">
        <div className="flex-1 bg-white pt-[93px] pl-[41px] shadow-[0_0_6px_rgba(0,0,0,0.4)]">
          <div className="ml-9 h-[21px] w-[21px] border-r border-b border-[#cccccc]" />
          <button type="button" aria-label="貼り付けのオプション" className="mt-0.5 flex items-center gap-1">
            <Ic w={12} h={14} className="text-[#a3bbe0]">
              <path d="M.8.800h6.700l3.700 3.700v8.700H.8z" fill="#dde7f6" strokeWidth="1.300" />
              <path d="M7 1v4h4M3 5h2M3 7.500h6M3 10h6" />
            </Ic>
            <Caret />
          </button>
        </div>
      </div>
    </section>
  );
}

/* ---------- presentation ---------- */

const slideTabs: Tab[] = [
  { t: '挿入', w: 'w-6' },
  { t: 'デザイン', w: 'w-[37px]' },
  { t: '切り替え', w: 'w-[39px]' },
  { t: 'アニメーション', w: 'w-[61px]' },
  { t: 'スライド ショー', w: 'w-[58px]' },
];

function Presentation() {
  return (
    <section className="absolute top-[281px] right-0 bottom-0 left-[528px] flex flex-col border-t border-l border-[#b9bbc0] bg-[#f4f4f4] shadow-[0_0_6px_rgba(0,0,0,0.4)]">
      <div className="bg-[#f3f4f9] pl-[3px]">
        <div className="flex h-4 items-center justify-end">
          <WindowButtons />
        </div>
        <Tabs mark="P" name="プレゼンテーション1" height="h-[26px]" start="mr-[3px] w-[86px] rounded-t-sm">
          <Account gap="ml-[7px]" />
          <span className="w-1" />
        </Tabs>
      </div>

      <div className="flex h-[34px] items-center pr-[13px] pl-[13px]">
        <MenuButton />
        <Bar className="mr-1" />
        <Btn label="クイックアクセス" w="w-[21px]"><More /></Btn>
        <span className="w-1.5" />
        <RuledTabs home="bg-[#e0743f]" tabs={slideTabs} />
        <SideScroll h="h-5" />
        <Finder text="Cli..." gap="ml-4" />
        <MenuTail space="w-1" />
      </div>

      <div className="flex h-[58px] items-start border-b border-[#d9d9d9]">
        <Big w="w-[62px]" icon={<Paste line="#e0703a" fill="#fce6da" />} lines={['貼り付け']} caret />
        <Two w="w-14">
          <Small dim icon={<Scissors />} text="切り取り" />
          <Small dim icon={<Copy />} text="コピー" />
        </Two>
        <Big dim w="w-[98px]" icon={<Painter line="#bdbdbd" fill="#f0f0f0" dark="#bdbdbd" />} lines={['書式のコピー/貼り付け']} />
        <Big w="ml-[10px] w-[88px]" icon={<Play />} lines={['現在のスライドから']} caret />
        <Big w="ml-1 w-14" icon={<NewSlide />} lines={['新しい', 'スライド']} caret />
        <Big w="w-11" icon={<LayoutIcon />} lines={['レイアウト']} caret />
        <Two w="ml-[9px] w-[73px]">
          <Small icon={<Reset />} text="リセット" />
          <Small icon={<SectionIcon />} text="セクション" caret />
        </Two>
        <div className="flex min-w-0 flex-1 flex-col gap-0.5 overflow-hidden text-[#b4b4b4]">
          <select aria-label="フォント" className="h-5 w-full shrink-0 appearance-none rounded-l-sm border border-r-0 border-[#dcdcdc] bg-[#fbfbfb]" />
          <Row>
            <Btn label="太字" w="w-[21px]"><B /></Btn>
            <Btn label="斜体" w="w-[21px]"><I /></Btn>
            <Btn label="下線" w="w-[21px]"><U /></Btn>
          </Row>
        </div>
        <SideScroll h="h-[56px]" />
      </div>

      <div className="flex min-h-0 flex-1 bg-[#e6e6e6]">
        <aside className="w-[101px] shrink-0 border-r border-[#dadada] pt-2">
          <div className="flex h-[18px] items-center">
            <button type="button" aria-label="パネルを閉じる" className="w-[45px] pl-[5px]"><More left /></button>
            <button type="button" aria-label="アウトライン" className="text-[#666]">
              <Ic w={15} h={12}>
                <path d="M6 2.500h9M6 6.500h9M6 10.500h9" />
                <path d="M.5 2.500h1.500M3 2.500h1.500M.5 6.500h1.500M3 6.500h1.500M.5 10.500h1.500M3 10.500h1.500" strokeWidth="2.200" />
              </Ic>
            </button>
            <button type="button" aria-label="スライド" className="ml-[10px] flex h-[17px] w-[30px] items-center justify-center rounded-full bg-[#a4a4a4] text-[#e8e8e8]">
              <Ic w={15} h={12}>
                <path d="M1 .8h11v8H1zM3.500 11h10.500V3" />
              </Ic>
            </button>
          </div>
          <div className="mt-[11px] flex pl-4">
            <span className="w-[9px] pt-1.5 text-[10px] leading-3 text-[#e0743f]">1</span>
            <span className="h-[41px] w-[68px] rounded-[3px] border-2 border-[#d97742] bg-white" />
          </div>
        </aside>
        <div className="flex flex-1 justify-center pt-[11px] pr-1">
          <div className="ml-[3px] w-[418px] bg-white px-[52px] pt-[38px] text-black shadow-[0_0_5px_rgba(0,0,0,0.5)]">
            <div className="flex h-[83px] items-end justify-center border border-dotted border-[#d6d6d6]">
              <h1 className="text-[25px] leading-[34px] font-medium whitespace-nowrap">クリックしてタイトルを入力</h1>
            </div>
            <div className="mt-0.5 h-10 border border-dotted border-[#d6d6d6] text-center text-[10px] leading-[14px] text-[#333]">クリックしてサブタイトルを入力</div>
          </div>
        </div>
        <div className="w-3 shrink-0 bg-[#e0e0e0] pt-2">
          <svg width="6" height="4" viewBox="0 0 6 4" aria-hidden="true" className="mx-auto">
            <path d="M3 0 6 4H0z" fill="#888" />
          </svg>
        </div>
      </div>
    </section>
  );
}

export default function App() {
  return (
    <main
      lang="ja"
      className="relative h-screen overflow-hidden font-['Noto_Sans','Noto_Sans_CJK_JP',sans-serif] text-[10px] text-[#666] [font-feature-settings:'palt']"
    >
      <Spreadsheet />
      <Writer />
      <Presentation />
    </main>
  );
}
